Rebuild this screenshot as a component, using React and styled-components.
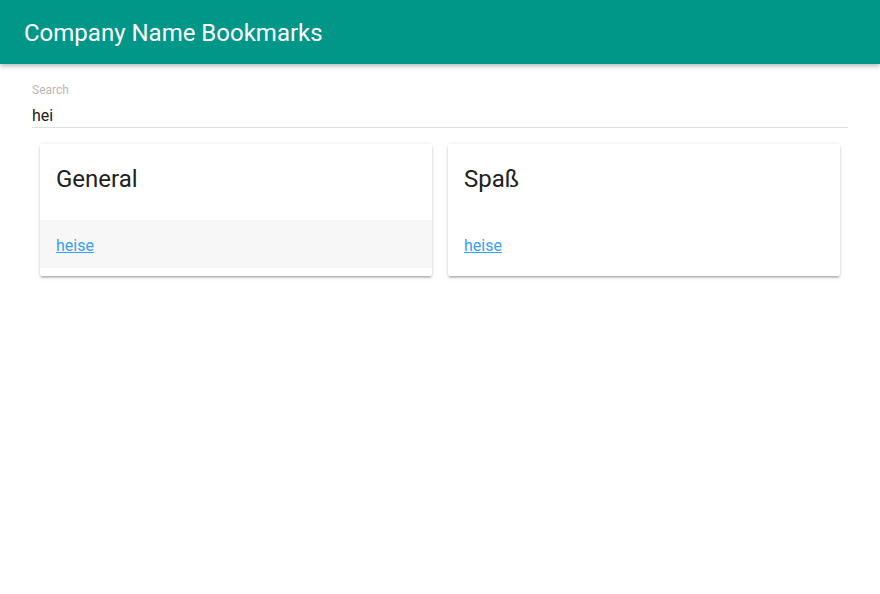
import React from "react";
import styled, { createGlobalStyle } from "styled-components";

const GlobalStyle = createGlobalStyle`
	body {
		margin: 0;
		background: #ffffff;
		font-family: Roboto, "Noto Sans", sans-serif;
		color: #212121;
	}
`;

const AppBar = styled.header`
		height: 64px;
		box-sizing: border-box;
		background: #009688;
		display: flex;
		align-items: center;
		padding: 2px 24px 0;
		box-shadow: 0 2px 4px rgba(0, 0, 0, 0.2), 0 3px 6px rgba(0, 0, 0, 0.08);
		position: relative;
	`,
	Title = styled.h1`
		margin: 0;
		font-size: 24px;
		font-weight: 400;
		color: #ffffff;
	`,
	Main = styled.main`
		padding: 17px 32px 16px;
	`,
	SearchField = styled.label`
		display: flex;
		flex-direction: column;
		border-bottom: 1px solid #e0e0e0;
	`,
	SearchLabel = styled.span`
		font-size: 12px;
		line-height: 18px;
		color: #bdb7af;
	`,
	SearchInput = styled.input`
		border: none;
		outline: none;
		padding: 4px 0 0;
		height: 24px;
		font-family: inherit;
		font-size: 16px;
		color: #212121;
		background: transparent;
	`,
	Grid = styled.div`
		display: grid;
		grid-template-columns: 1fr 1fr;
		gap: 16px;
		padding: 16px 8px;
	`,
	Card = styled.section`
		background: #ffffff;
		border-radius: 2px;
		padding-bottom: 8px;
		box-shadow: 0 2px 2px rgba(0, 0, 0, 0.14), 0 3px 1px -2px rgba(0, 0, 0, 0.12),
			0 1px 5px rgba(0, 0, 0, 0.12);
	`,
	CardTitle = styled.h2`
		margin: 0;
		padding: 19px 16px 25px;
		font-size: 24px;
		line-height: 32px;
		font-weight: 400;
		color: #212121;
	`,
	LinkRow = styled.div`
		height: 46px;
		padding: 2px 16px 0;
		display: flex;
		align-items: center;
		background: ${(p) => (p.$active ? "#f7f7f7" : "transparent")};
	`,
	Link = styled.a`
		font-size: 16px;
		color: #36a0f6;
		text-decoration: underline;
	`;

const groups = [
	{ name: "General", links: [{ label: "heise", active: true }] },
	{ name: "Spaß", links: [{ label: "heise", active: false }] },
];

const App = () => {
	const [query, setQuery] = React.useState("hei");

	return (
		<>
			<GlobalStyle />
			<AppBar>
				<Title>Company Name Bookmarks</Title>
			</AppBar>
			<Main>
				<SearchField>
					<SearchLabel>Search</SearchLabel>
					<SearchInput
						value={query}
						onChange={(e) => setQuery(e.target.value)}
					/>
				</SearchField>
				<Grid>
					{groups.map((group) => (
						<Card key={group.name}>
							<CardTitle>{group.name}</CardTitle>
							{group.links.map((link) => (
								<LinkRow key={link.label} $active={link.active}>
									<Link href="#">{link.label}</Link>
								</LinkRow>
							))}
						</Card>
					))}
				</Grid>
			</Main>
		</>
	);
};

export default App;
